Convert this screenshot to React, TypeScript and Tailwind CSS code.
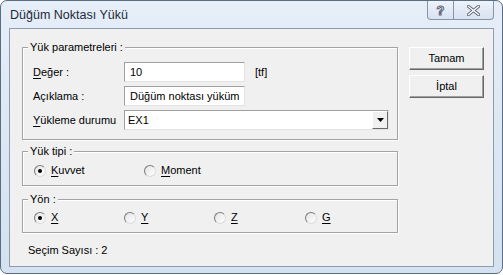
import React from "react";

const font = { fontFamily: '"Liberation Sans", Arial, sans-serif' };

function U({ c }: { c: string }) {
  return <span className="underline underline-offset-[2px] decoration-1">{c}</span>;
}

function Radio({ checked }: { checked?: boolean }) {
  return (
    <span className="relative inline-flex w-[12px] h-[12px] rounded-full border border-t-[#7a7a7a] border-l-[#7a7a7a] border-r-[#dcdcdc] border-b-[#dcdcdc] bg-gradient-to-br from-[#e4e4e4] to-white items-center justify-center shrink-0">
      {checked && <span className="w-[4px] h-[4px] rounded-full bg-black" />}
    </span>
  );
}

function Group({ title, className, children }: { title: string; className: string; children: React.ReactNode }) {
  return (
    <div className={"relative border border-[#a3a3a3] shadow-[inset_1px_1px_0_#fff,1px_1px_0_#fff] " + className}>
      <span className="absolute -top-[8px] left-[5px] bg-[#f0f0f0] px-[2px] leading-[14px]">{title}</span>
      {children}
    </div>
  );
}

function Input({ value, w }: { value: string; w: string }) {
  return (
    <div className={"h-[20px] bg-white border border-t-[#a0a0a0] border-l-[#a0a0a0] border-r-[#e3e3e3] border-b-[#e3e3e3] flex items-center pl-[5px] " + w}>
      {value}
    </div>
  );
}

function Button({ label }: { label: string }) {
  return (
    <div className="w-[75px] h-[23px] bg-[#f0f0f0] border border-t-[#fff] border-l-[#fff] border-r-[#696969] border-b-[#696969] shadow-[inset_-1px_-1px_0_#a0a0a0] flex items-center justify-center">
      {label}
    </div>
  );
}

export default function App() {
  return (
    <div className="w-[503px] h-[275px] bg-white text-[11px] text-black" style={font}>
      <div className="w-[503px] h-[274px] rounded-[7px] border border-[#5b6d82] bg-gradient-to-b from-[#e6eef8] via-[#dce7f4] to-[#d3e1f1] flex flex-col">
        <div className="h-[27px] flex items-start shrink-0">
          <span className="pl-[9px] pt-[7px] text-[12.5px] text-[#1e2a3a] leading-[15px]">Düğüm Noktası Yükü</span>
          <div className="ml-auto mr-[8px] flex">
            <div className="w-[27px] h-[19px] border border-t-0 border-[#8795a8] rounded-bl-[4px] bg-gradient-to-b from-[#eef3fa] to-[#d7e2f0] flex items-center justify-center">
              <span className="text-[13px] font-bold text-white leading-none" style={{ WebkitTextStroke: "1px #5c6675" }}>?</span>
            </div>
            <div className="w-[40px] h-[19px] border border-t-0 border-l-0 border-[#8795a8] rounded-br-[4px] bg-gradient-to-b from-[#eef3fa] to-[#d7e2f0] flex items-center justify-center">
              <svg width="13" height="11" viewBox="0 0 13 11">
                <path d="M1.5 1.5 L11.5 9.5 M11.5 1.5 L1.5 9.5" stroke="#5c6675" strokeWidth="3.2" strokeLinecap="square" />
                <path d="M1.5 1.5 L11.5 9.5 M11.5 1.5 L1.5 9.5" stroke="#ffffff" strokeWidth="1.4" strokeLinecap="square" />
              </svg>
            </div>
          </div>
        </div>
        <div className="mx-[8px] mb-[6px] flex-1 border border-[#8e9cae] bg-[#f0f0f0] flex items-start pt-[18px] pl-[12px]">
          <div className="w-[376px] flex flex-col">
            <Group title="Yük parametreleri :" className="h-[93px] pt-[14px] pl-[10px] flex flex-col gap-[4px]">
              <div className="flex items-center h-[20px]">
                <span className="w-[91px]"><U c="D" />eğer :</span>
                <Input value="10" w="w-[121px]" />
                <span className="ml-[10px]">[tf]</span>
              </div>
              <div className="flex items-center h-[20px]">
                <span className="w-[91px]">Açıklama :</span>
                <Input value="Düğüm noktası yüküm" w="w-[121px]" />
              </div>
              <div className="flex items-center h-[20px]">
                <span className="w-[91px]"><U c="Y" />ükleme durumu</span>
                <div className="w-[265px] h-[20px] bg-white border border-t-[#a0a0a0] border-l-[#a0a0a0] border-r-[#e3e3e3] border-b-[#e3e3e3] flex items-center pl-[3px]">
                  <span className="flex-1">EX1</span>
                  <div className="w-[16px] h-[18px] border border-t-white border-l-white border-r-[#696969] border-b-[#696969] bg-[#f0f0f0] flex items-center justify-center">
                    <svg width="7" height="4" viewBox="0 0 7 4"><path d="M0 0 H7 L3.5 4 Z" fill="#000" /></svg>
                  </div>
                </div>
              </div>
            </Group>
            <Group title="Yük tipi :" className="mt-[11px] h-[35px] pt-[4px] pl-[11px] flex items-center">
              <div className="w-[110px] flex items-center gap-[5px]"><Radio checked /><span><U c="K" />uvvet</span></div>
              <div className="flex items-center gap-[5px]"><Radio /><span><U c="M" />oment</span></div>
            </Group>
            <Group title="Yön :" className="mt-[13px] h-[34px] pt-[3px] pl-[11px] flex items-center">
              <div className="w-[90px] flex items-center gap-[5px]"><Radio checked /><U c="X" /></div>
              <div className="w-[90px] flex items-center gap-[5px]"><Radio /><U c="Y" /></div>
              <div className="w-[91px] flex items-center gap-[5px]"><Radio /><U c="Z" /></div>
              <div className="flex items-center gap-[5px]"><Radio /><U c="G" /></div>
            </Group>
            <div className="mt-[11px] pl-[6px] leading-[13px]">Seçim Sayısı : 2</div>
          </div>
          <div className="ml-[11px] flex flex-col gap-[5px]">
            <Button label="Tamam" />
            <Button label="İptal" />
          </div>
        </div>
      </div>
    </div>
  );
}
